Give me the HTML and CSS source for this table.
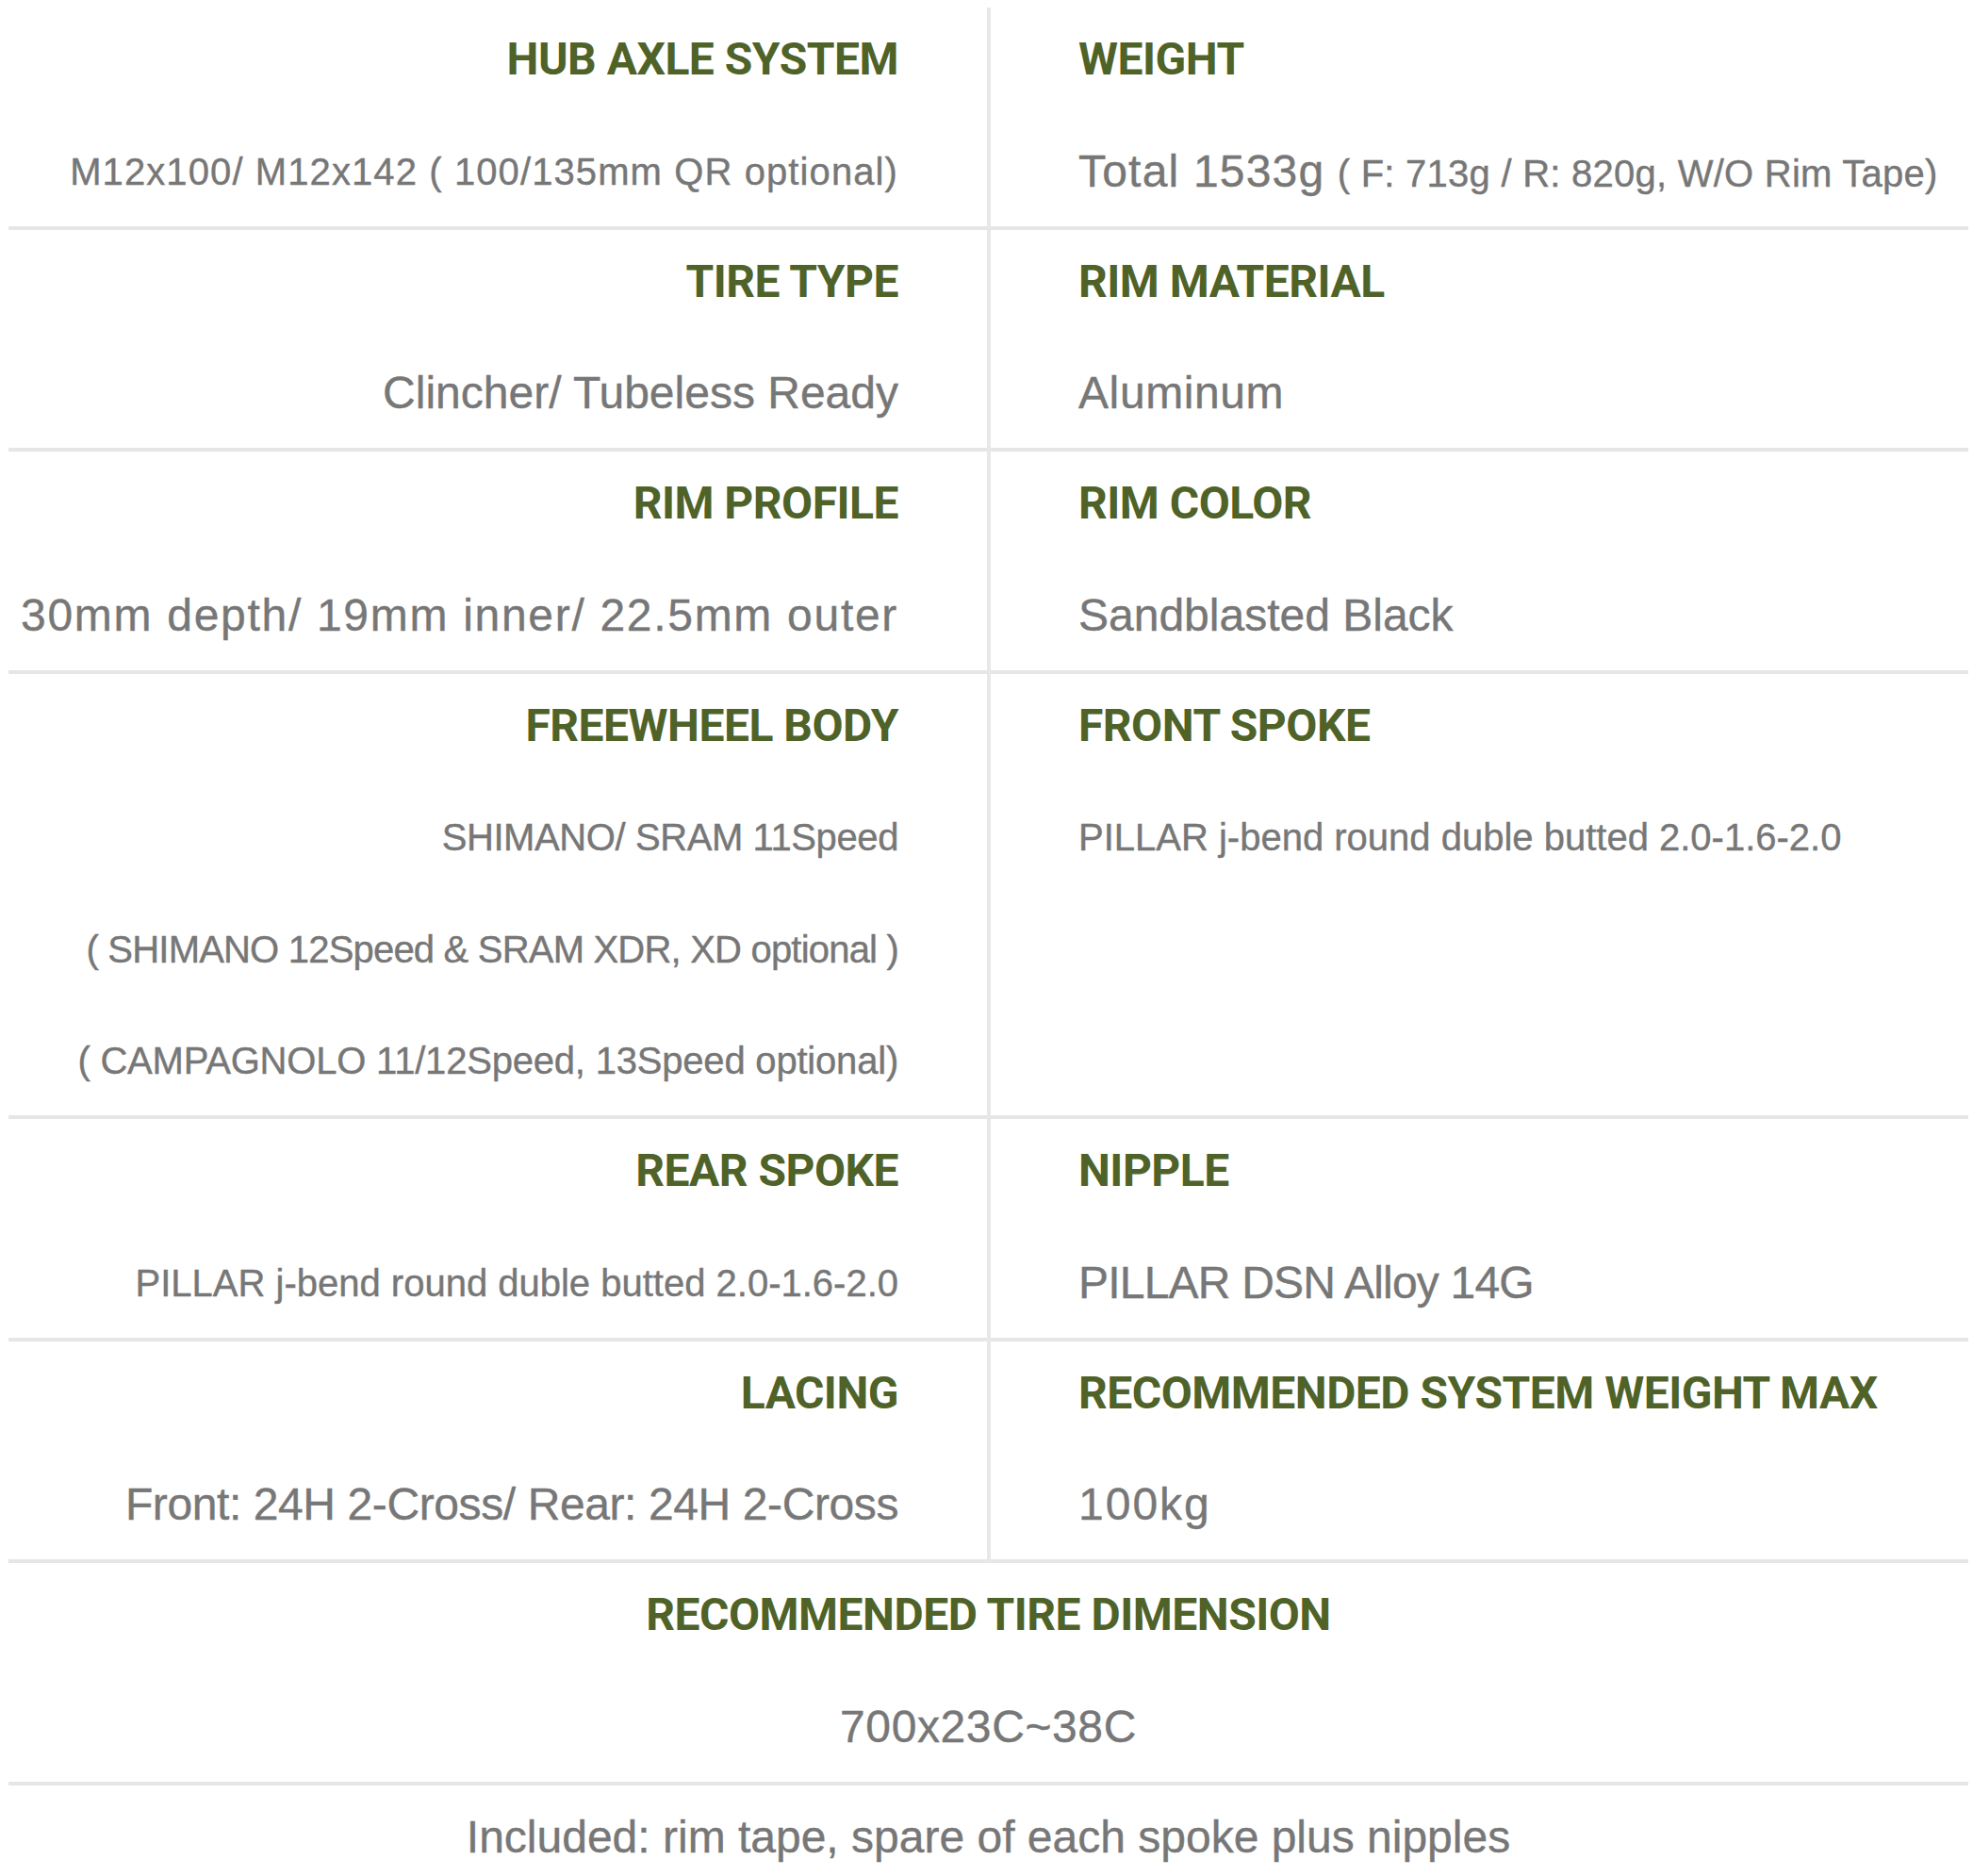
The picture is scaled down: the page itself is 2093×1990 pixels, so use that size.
FILE: index.html
```html
<!DOCTYPE html>
<html lang="en">
<head>
<meta charset="utf-8">
<title>Wheelset Specifications</title>
<link rel="stylesheet" href="styles.css">
</head>
<body>
<div class="specs">
  <div class="cell left">
    <p class="title">HUB AXLE SYSTEM</p>
    <p class="val small track-wide-s">M12x100/ M12x142 ( 100/135mm QR optional)</p>
  </div>
  <div class="cell right">
    <p class="title">WEIGHT</p>
    <p class="val"><span class="track-wide">Total 1533g</span> <span class="small track-faint">( F: 713g / R: 820g, W/O Rim Tape)</span></p>
  </div>

  <div class="cell left">
    <p class="title">TIRE TYPE</p>
    <p class="val">Clincher/ Tubeless Ready</p>
  </div>
  <div class="cell right">
    <p class="title">RIM MATERIAL</p>
    <p class="val track-slight">Aluminum</p>
  </div>

  <div class="cell left">
    <p class="title">RIM PROFILE</p>
    <p class="val track-wider">30mm depth/ 19mm inner/ 22.5mm outer</p>
  </div>
  <div class="cell right">
    <p class="title">RIM COLOR</p>
    <p class="val">Sandblasted Black</p>
  </div>

  <div class="cell left">
    <p class="title">FREEWHEEL BODY</p>
    <p class="val small track-tight">SHIMANO/ SRAM 11Speed</p>
    <p class="val small track-tighter">( SHIMANO 12Speed &amp; SRAM XDR, XD optional )</p>
    <p class="val small track-snug">( CAMPAGNOLO 11/12Speed, 13Speed optional)</p>
  </div>
  <div class="cell right">
    <p class="title">FRONT SPOKE</p>
    <p class="val small">PILLAR j-bend round duble butted 2.0-1.6-2.0</p>
  </div>

  <div class="cell left">
    <p class="title">REAR SPOKE</p>
    <p class="val small">PILLAR j-bend round duble butted 2.0-1.6-2.0</p>
  </div>
  <div class="cell right">
    <p class="title">NIPPLE</p>
    <p class="val track-tighter">PILLAR DSN Alloy 14G</p>
  </div>

  <div class="cell left">
    <p class="title">LACING</p>
    <p class="val track-tight">Front: 24H 2-Cross/ Rear: 24H 2-Cross</p>
  </div>
  <div class="cell right">
    <p class="title">RECOMMENDED SYSTEM WEIGHT MAX</p>
    <p class="val track-widest">100kg</p>
  </div>

  <div class="cell full">
    <p class="title">RECOMMENDED TIRE DIMENSION</p>
    <p class="val track-slight">700x23C~38C</p>
  </div>

  <div class="cell full last">
    <p class="val">Included: rim tape, spare of each spoke plus nipples</p>
  </div>
</div>
</body>
</html>
```

FILE: styles.css
```css
html, body {
  margin: 0;
  padding: 0;
  background: #ffffff;
}

body {
  padding: 8px 5px 0 9px;
}

.specs {
  display: grid;
  grid-template-columns: 1042px 1fr;
  font-family: "Liberation Sans", Arial, sans-serif;
}

.cell {
  display: flex;
  flex-direction: column;
  gap: 58.5px;
  padding: 25px 0 28px;
  border-bottom: 4px solid #e6e6e6;
}

.cell.left {
  align-items: flex-end;
  padding-right: 94px;
  border-right: 4px solid #e8e8e8;
}

.cell.right {
  align-items: flex-start;
  padding-left: 93px;
}

.cell.full {
  grid-column: 1 / -1;
  align-items: center;
}

.cell.last {
  border-bottom: none;
}

.cell p {
  margin: 0;
  height: 60px;
  line-height: 60px;
  white-space: nowrap;
}

.title {
  font-family: Roboto, "Liberation Sans", sans-serif;
  font-weight: 700;
  font-size: 48px;
  color: #4f6228;
  letter-spacing: -0.5px;
}

.val {
  font-size: 48px;
  color: #777777;
  -webkit-text-stroke: 0.4px #777777;
}

.small {
  font-size: 40px;
}

.track-tighter { letter-spacing: -0.8px; }
.track-tight { letter-spacing: -0.4px; }
.track-snug { letter-spacing: -0.2px; }
.track-faint { letter-spacing: 0.25px; }
.track-slight { letter-spacing: 0.6px; }
.track-wide-s { letter-spacing: 1.1px; }
.track-wide { letter-spacing: 1.2px; }
.track-wider { letter-spacing: 1.7px; }
.track-widest { letter-spacing: 2px; }
```
